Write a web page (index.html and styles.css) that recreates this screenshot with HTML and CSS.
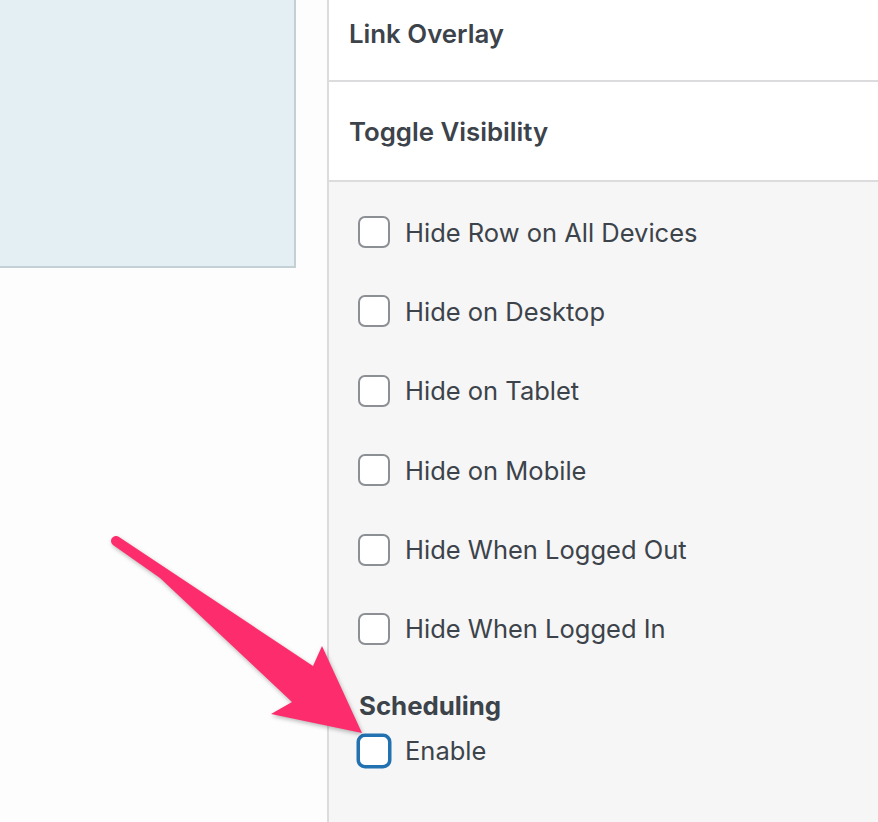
FILE: index.html
```html
<!DOCTYPE html>
<html lang="en">
<head>
<meta charset="utf-8">
<title>Row settings</title>
<link rel="stylesheet" href="styles.css">
</head>
<body>
<div class="page">
  <div class="canvas">
    <div class="preview-box"></div>
  </div>
  <aside class="panel">
    <div class="panel-header first"><span>Link Overlay</span></div>
    <div class="panel-header"><span>Toggle Visibility</span></div>
    <div class="panel-body">
      <div class="vis-list">
        <label class="check-row"><span class="box"></span><span class="label">Hide Row on All Devices</span></label>
        <label class="check-row"><span class="box"></span><span class="label">Hide on Desktop</span></label>
        <label class="check-row"><span class="box"></span><span class="label">Hide on Tablet</span></label>
        <label class="check-row"><span class="box"></span><span class="label">Hide on Mobile</span></label>
        <label class="check-row"><span class="box"></span><span class="label">Hide When Logged Out</span></label>
        <label class="check-row"><span class="box"></span><span class="label">Hide When Logged In</span></label>
      </div>
      <div class="sched">
        <div class="sched-title">Scheduling</div>
        <label class="check-row"><span class="box focus"></span><span class="label">Enable</span></label>
      </div>
    </div>
  </aside>
</div>
<svg class="arrow" width="878" height="822" viewBox="0 0 878 822" aria-hidden="true">
  <path d="M119,537 L313,666 L322,646 L362,733 L271,714 L292,702 L160,578 L113,545 A5,5 0 0 1 119,537 Z" fill="#fd2d6d"/>
</svg>
</body>
</html>
```

FILE: styles.css
```css
html, body {
  margin: 0;
  padding: 0;
}
body {
  width: 878px;
  height: 822px;
  overflow: hidden;
  background: #fdfdfd;
  font-family: Inter, "Noto Sans", "Liberation Sans", sans-serif;
  color: #3c434a;
  position: relative;
}
.page {
  display: flex;
  height: 822px;
}
.canvas {
  width: 327px;
  flex: none;
}
.preview-box {
  width: 294px;
  height: 266px;
  background: #e4eff4;
  border-right: 2px solid #c3d0d6;
  border-bottom: 2px solid #c3d0d6;
}
.panel {
  flex: 1;
  border-left: 2px solid #dcdcde;
  display: flex;
  flex-direction: column;
  margin-top: -18px;
}
.panel-header {
  height: 98px;
  background: #fff;
  border-bottom: 2px solid #dcdcde;
  display: flex;
  align-items: center;
  padding-left: 20px;
  font-size: 25.8px;
  font-weight: 600;
  letter-spacing: 0;
}
.panel-header.first {
  box-sizing: border-box;
  height: 100px;
  padding-top: 4px;
}
.panel-body {
  flex: 1;
  background: #f6f6f6;
  padding: 34px 0 0 29px;
}
.vis-list {
  display: flex;
  flex-direction: column;
  gap: 47.4px;
}
.check-row {
  display: flex;
  align-items: center;
  height: 32px;
}
.box {
  width: 32px;
  height: 32px;
  box-sizing: border-box;
  border: 2px solid #8c8f94;
  border-radius: 7px;
  background: #fff;
  flex: none;
}
.box.focus {
  border-color: #2271b1;
  box-shadow: 0 0 0 1.5px #2271b1;
}
.label {
  margin-left: 15px;
  font-size: 25.5px;
  font-weight: 400;
}
.sched {
  margin-top: 46px;
}
.sched-title {
  font-size: 25.8px;
  font-weight: 700;
  line-height: 30px;
  margin-left: 1px;
  margin-bottom: 14px;
}
.arrow {
  position: absolute;
  left: 0;
  top: 0;
  pointer-events: none;
  filter: drop-shadow(1px 2px 2px rgba(0, 0, 0, 0.28));
}
```
